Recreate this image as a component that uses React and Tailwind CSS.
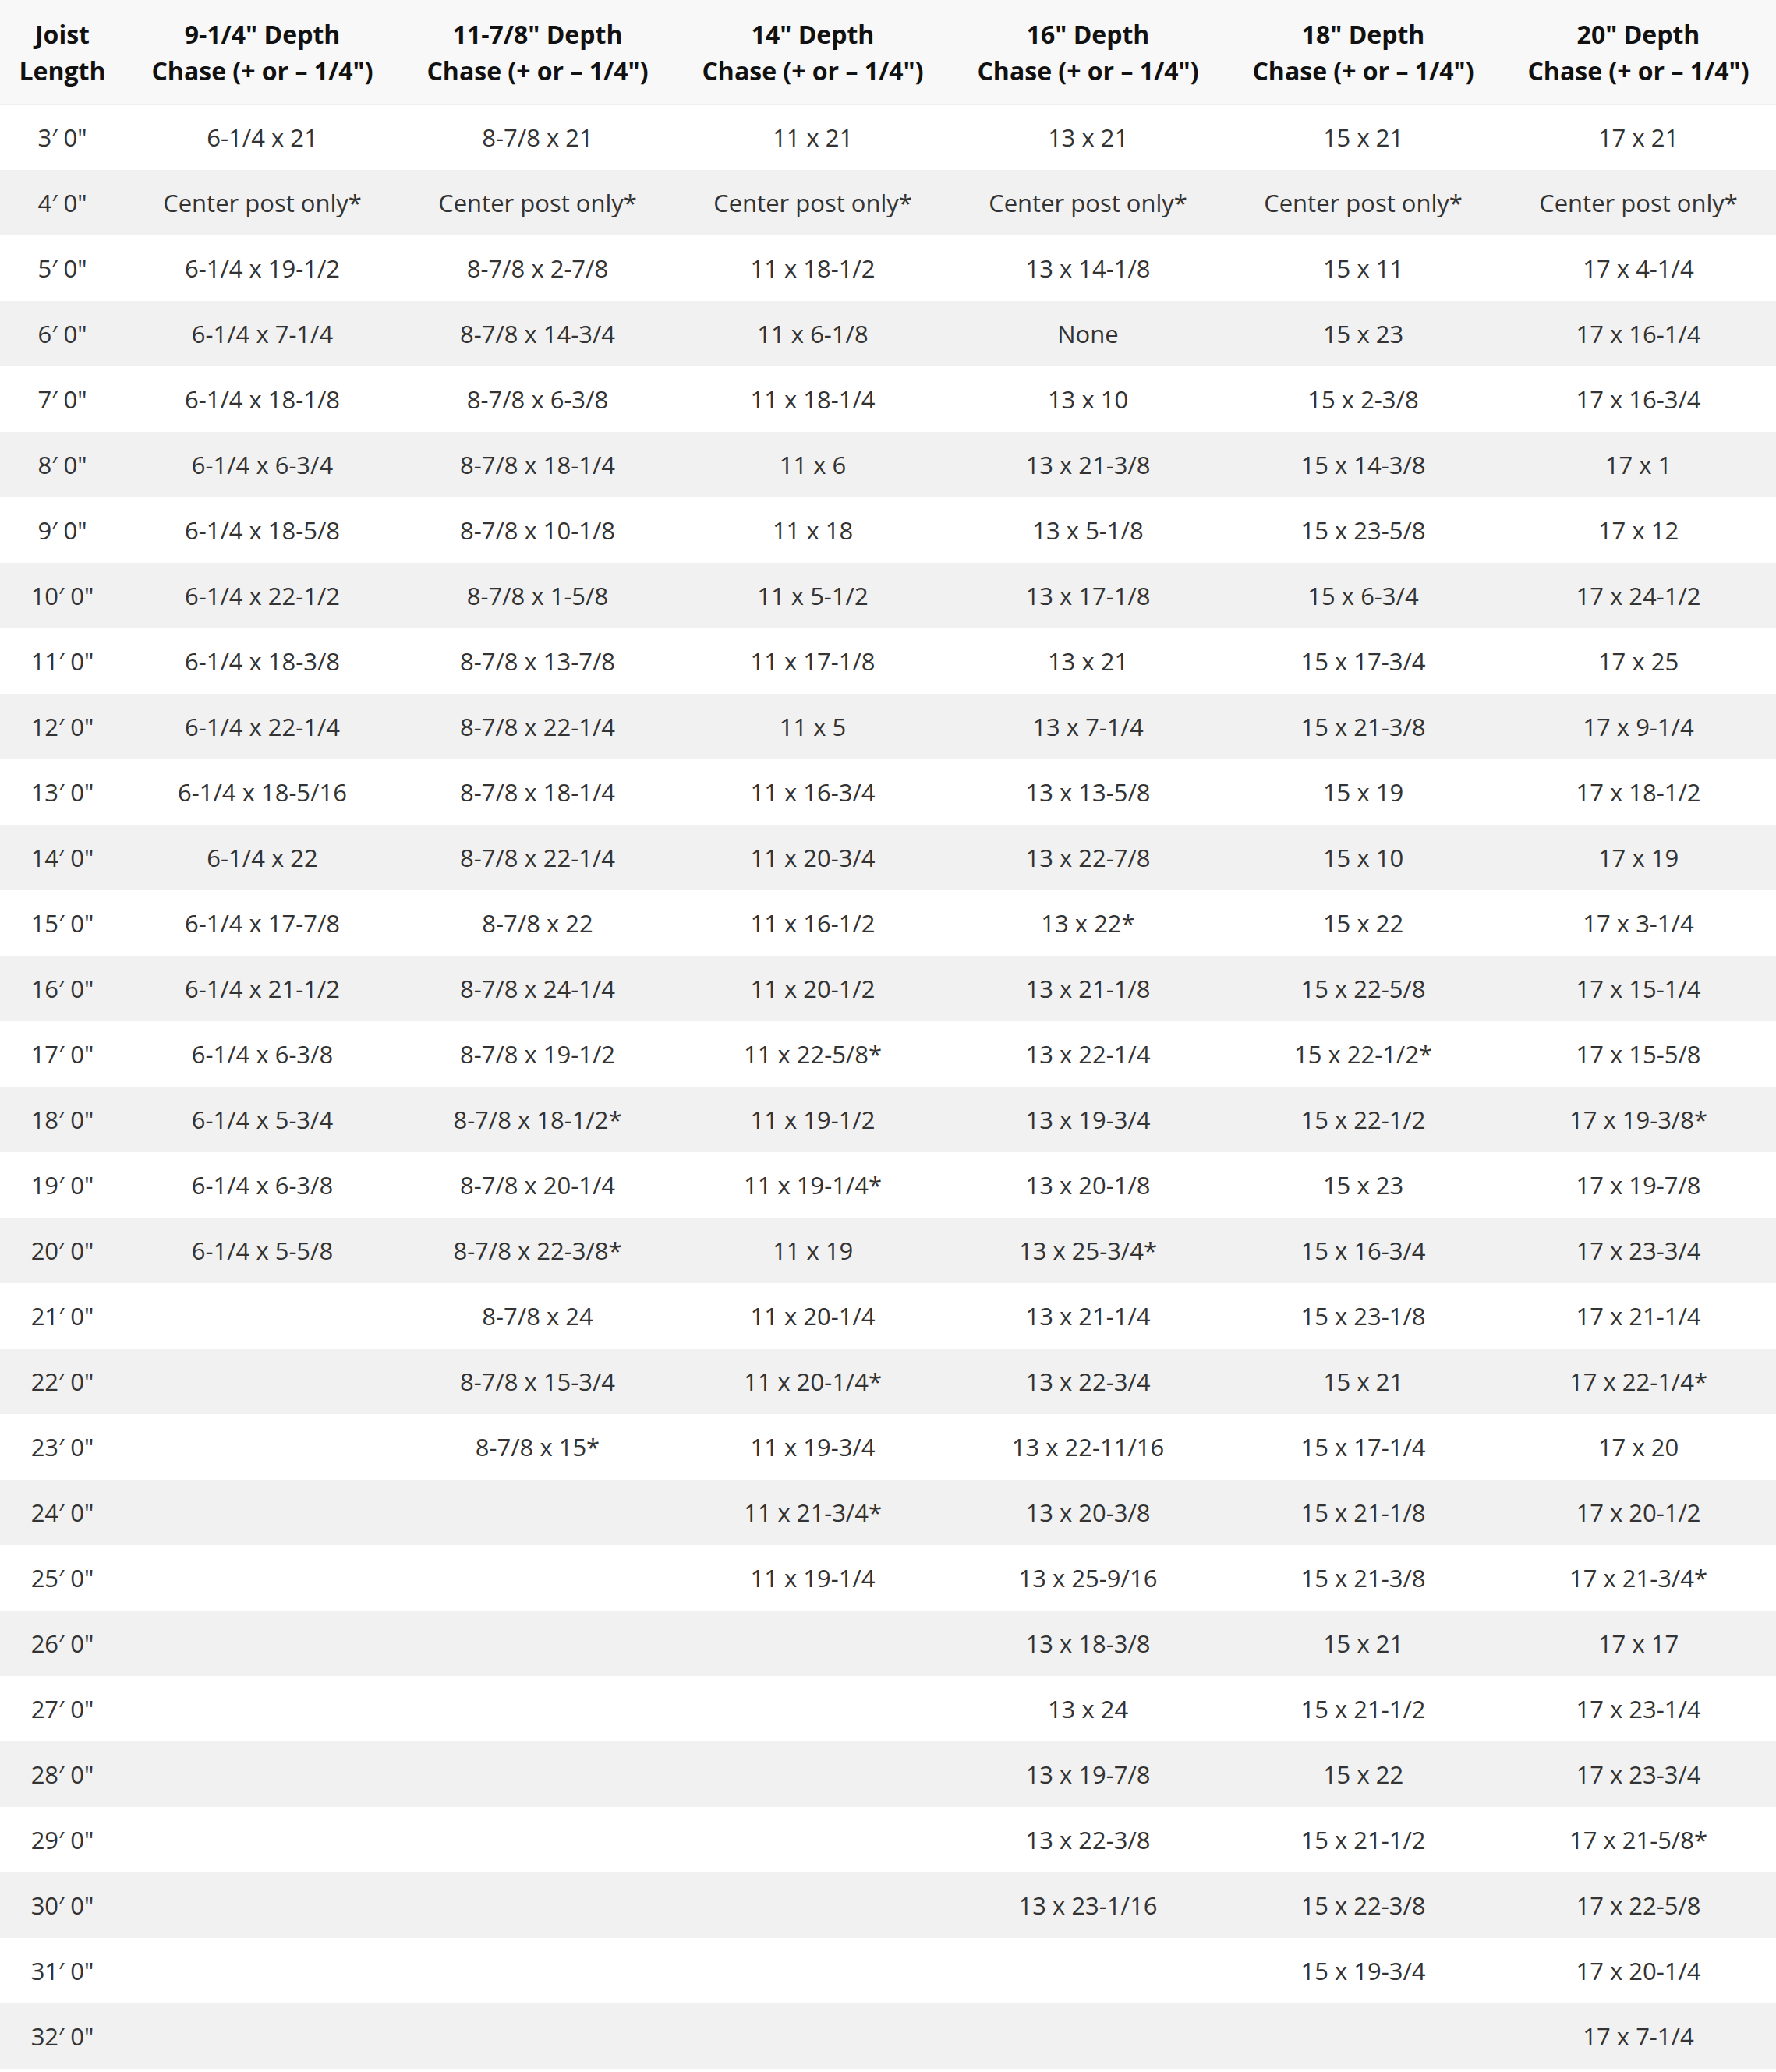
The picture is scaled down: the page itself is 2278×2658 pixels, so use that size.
import React from 'react'

const headers = [
  ['Joist', 'Length'],
  ['9-1/4" Depth', 'Chase (+ or – 1/4")'],
  ['11-7/8" Depth', 'Chase (+ or – 1/4")'],
  ['14" Depth', 'Chase (+ or – 1/4")'],
  ['16" Depth', 'Chase (+ or – 1/4")'],
  ['18" Depth', 'Chase (+ or – 1/4")'],
  ['20" Depth', 'Chase (+ or – 1/4")'],
]

const cp = 'Center post only*'

const rows = [
  ['3′ 0"', '6-1/4 x 21', '8-7/8 x 21', '11 x 21', '13 x 21', '15 x 21', '17 x 21'],
  ['4′ 0"', cp, cp, cp, cp, cp, cp],
  ['5′ 0"', '6-1/4 x 19-1/2', '8-7/8 x 2-7/8', '11 x 18-1/2', '13 x 14-1/8', '15 x 11', '17 x 4-1/4'],
  ['6′ 0"', '6-1/4 x 7-1/4', '8-7/8 x 14-3/4', '11 x 6-1/8', 'None', '15 x 23', '17 x 16-1/4'],
  ['7′ 0"', '6-1/4 x 18-1/8', '8-7/8 x 6-3/8', '11 x 18-1/4', '13 x 10', '15 x 2-3/8', '17 x 16-3/4'],
  ['8′ 0"', '6-1/4 x 6-3/4', '8-7/8 x 18-1/4', '11 x 6', '13 x 21-3/8', '15 x 14-3/8', '17 x 1'],
  ['9′ 0"', '6-1/4 x 18-5/8', '8-7/8 x 10-1/8', '11 x 18', '13 x 5-1/8', '15 x 23-5/8', '17 x 12'],
  ['10′ 0"', '6-1/4 x 22-1/2', '8-7/8 x 1-5/8', '11 x 5-1/2', '13 x 17-1/8', '15 x 6-3/4', '17 x 24-1/2'],
  ['11′ 0"', '6-1/4 x 18-3/8', '8-7/8 x 13-7/8', '11 x 17-1/8', '13 x 21', '15 x 17-3/4', '17 x 25'],
  ['12′ 0"', '6-1/4 x 22-1/4', '8-7/8 x 22-1/4', '11 x 5', '13 x 7-1/4', '15 x 21-3/8', '17 x 9-1/4'],
  ['13′ 0"', '6-1/4 x 18-5/16', '8-7/8 x 18-1/4', '11 x 16-3/4', '13 x 13-5/8', '15 x 19', '17 x 18-1/2'],
  ['14′ 0"', '6-1/4 x 22', '8-7/8 x 22-1/4', '11 x 20-3/4', '13 x 22-7/8', '15 x 10', '17 x 19'],
  ['15′ 0"', '6-1/4 x 17-7/8', '8-7/8 x 22', '11 x 16-1/2', '13 x 22*', '15 x 22', '17 x 3-1/4'],
  ['16′ 0"', '6-1/4 x 21-1/2', '8-7/8 x 24-1/4', '11 x 20-1/2', '13 x 21-1/8', '15 x 22-5/8', '17 x 15-1/4'],
  ['17′ 0"', '6-1/4 x 6-3/8', '8-7/8 x 19-1/2', '11 x 22-5/8*', '13 x 22-1/4', '15 x 22-1/2*', '17 x 15-5/8'],
  ['18′ 0"', '6-1/4 x 5-3/4', '8-7/8 x 18-1/2*', '11 x 19-1/2', '13 x 19-3/4', '15 x 22-1/2', '17 x 19-3/8*'],
  ['19′ 0"', '6-1/4 x 6-3/8', '8-7/8 x 20-1/4', '11 x 19-1/4*', '13 x 20-1/8', '15 x 23', '17 x 19-7/8'],
  ['20′ 0"', '6-1/4 x 5-5/8', '8-7/8 x 22-3/8*', '11 x 19', '13 x 25-3/4*', '15 x 16-3/4', '17 x 23-3/4'],
  ['21′ 0"', '', '8-7/8 x 24', '11 x 20-1/4', '13 x 21-1/4', '15 x 23-1/8', '17 x 21-1/4'],
  ['22′ 0"', '', '8-7/8 x 15-3/4', '11 x 20-1/4*', '13 x 22-3/4', '15 x 21', '17 x 22-1/4*'],
  ['23′ 0"', '', '8-7/8 x 15*', '11 x 19-3/4', '13 x 22-11/16', '15 x 17-1/4', '17 x 20'],
  ['24′ 0"', '', '', '11 x 21-3/4*', '13 x 20-3/8', '15 x 21-1/8', '17 x 20-1/2'],
  ['25′ 0"', '', '', '11 x 19-1/4', '13 x 25-9/16', '15 x 21-3/8', '17 x 21-3/4*'],
  ['26′ 0"', '', '', '', '13 x 18-3/8', '15 x 21', '17 x 17'],
  ['27′ 0"', '', '', '', '13 x 24', '15 x 21-1/2', '17 x 23-1/4'],
  ['28′ 0"', '', '', '', '13 x 19-7/8', '15 x 22', '17 x 23-3/4'],
  ['29′ 0"', '', '', '', '13 x 22-3/8', '15 x 21-1/2', '17 x 21-5/8*'],
  ['30′ 0"', '', '', '', '13 x 23-1/16', '15 x 22-3/8', '17 x 22-5/8'],
  ['31′ 0"', '', '', '', '', '15 x 19-3/4', '17 x 20-1/4'],
  ['32′ 0"', '', '', '', '', '', '17 x 7-1/4'],
]

export default function App() {
  return (
    <div className="w-[2278px] min-h-[2658px] bg-white font-['Open_Sans',sans-serif]">
      <table className="w-full table-fixed border-collapse">
        <colgroup>
          <col className="w-[160px]" />
          {headers.slice(1).map((_, i) => (
            <col key={i} className="w-[353px]" />
          ))}
        </colgroup>
        <thead>
          <tr className="h-[134px] bg-[#f8f8f8] border-b-2 border-[#efefef]">
            {headers.map(([a, b], i) => (
              <th key={i} className="p-0 text-center align-middle text-[32px] leading-[47px] font-bold text-[#111]">
                {a}
                <br />
                {b}
              </th>
            ))}
          </tr>
        </thead>
        <tbody>
          {rows.map((row, r) => (
            <tr key={r} className={r % 2 === 0 ? 'h-[84px] bg-white' : 'h-[84px] bg-[#f1f1f1]'}>
              {row.map((cell, c) => (
                <td key={c} className="p-0 text-center align-middle text-[31px] text-[#333]">
                  {cell}
                </td>
              ))}
            </tr>
          ))}
        </tbody>
      </table>
    </div>
  )
}
